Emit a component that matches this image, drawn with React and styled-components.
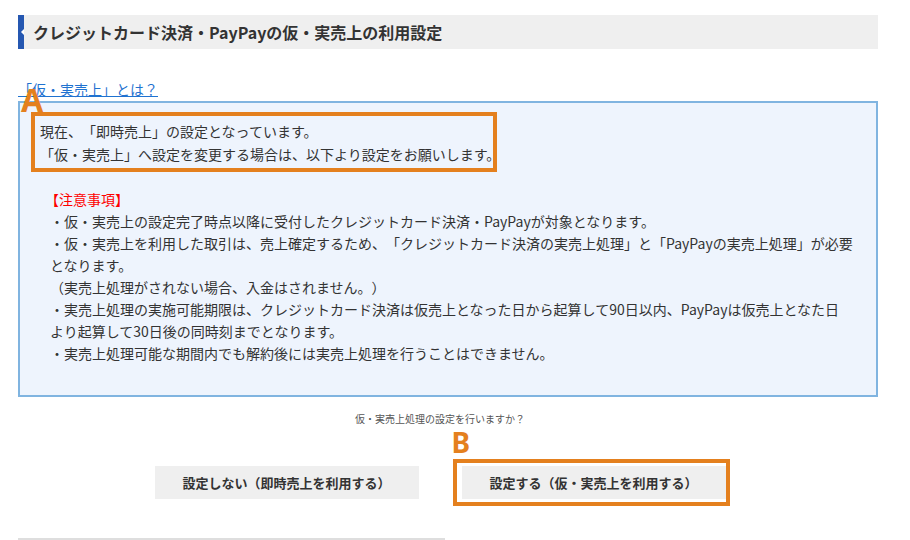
import React from "react";
import styled, { createGlobalStyle } from "styled-components";

const GlobalStyle = createGlobalStyle`
  body {
    margin: 0;
    background: #fff;
    color: #333;
    font-family: "Noto Sans CJK JP", "Noto Sans", sans-serif;
    text-spacing-trim: space-all;
  }
`;

const ORANGE = "#e4801e";

const Page = styled.div`
  width: 860px;
  padding: 15px 0 0 18px;
`;

const Heading = styled.h2`
  position: relative;
  display: flex;
  align-items: center;
  height: 34px;
  margin: 0;
  padding-left: 9px;
  background: #efefef;
  border-left: 6px solid #2557b1;
  font-size: 16px;
  font-weight: 700;
  color: #333;

  &::before {
    content: "";
    position: absolute;
    left: -3px;
    top: 14px;
    border-top: 3px solid transparent;
    border-bottom: 3px solid transparent;
    border-right: 3px solid #fff;
  }
`;

const HelpLink = styled.a`
  display: block;
  width: fit-content;
  margin-top: 29px;
  font-size: 14px;
  line-height: 22px;
  color: #1f72d0;
  text-decoration: underline;
`;

const InfoBox = styled.div`
  position: relative;
  box-sizing: border-box;
  margin-top: 1px;
  padding: 9px 0 31px 20px;
  background: #eef4fd;
  border: 2px solid #80b4e0;
  font-size: 14px;
`;

const Marker = styled.span`
  position: absolute;
  left: ${(p) => p.$left}px;
  top: ${(p) => p.$top}px;
  font-family: "Noto Sans", sans-serif;
  font-weight: 700;
  font-size: ${(p) => p.$size}px;
  line-height: 1;
  color: ${ORANGE};
  pointer-events: none;
`;

const CurrentNote = styled.div`
  box-sizing: border-box;
  width: 466px;
  margin-left: -9px;
  padding: 4px 0 2px 5px;
  border: 4px solid ${ORANGE};
  line-height: 23px;
  white-space: nowrap;
`;

const Notes = styled.div`
  margin-top: 16px;
  padding-left: 10px;
  line-height: 22px;
  white-space: nowrap;
`;

const Caution = styled.span`
  margin-left: -5px;
  color: #f00;
`;

const Footer = styled.div`
  width: 844px;
  text-align: center;
`;

const Question = styled.p`
  margin: 14px 0 0;
  font-size: 10px;
  line-height: 16px;
  color: #555;
`;

const Buttons = styled.div`
  display: flex;
  justify-content: center;
  gap: 43px;
  margin-top: 39px;
`;

const Highlight = styled.div`
  position: relative;

  &::after {
    content: "";
    position: absolute;
    inset: -7px -4px -7px -9px;
    border: 4px solid ${ORANGE};
    pointer-events: none;
  }
`;

const ChoiceButton = styled.button`
  display: block;
  width: 264px;
  height: 33px;
  padding: 0;
  border: none;
  background: #efefef;
  font-family: inherit;
  font-size: 13px;
  font-weight: 700;
  color: #333;
  text-spacing-trim: space-all;
  cursor: pointer;
`;

const Divider = styled.div`
  width: 427px;
  height: 2px;
  margin-top: 39px;
  background: #dedede;
`;

export default function App() {
  return (
    <>
      <GlobalStyle />
      <Page>
        <Heading>クレジットカード決済・PayPayの仮・実売上の利用設定</Heading>
        <HelpLink href="#">「仮・実売上」とは？</HelpLink>
        <InfoBox>
          <Marker $left={1} $top={-19} $size={32}>A</Marker>
          <CurrentNote>
            現在、「即時売上」の設定となっています。
            <br />
            「仮・実売上」へ設定を変更する場合は、以下より設定をお願いします。
          </CurrentNote>
          <Notes>
            <Caution>【注意事項】</Caution>
            <br />
            ・仮・実売上の設定完了時点以降に受付したクレジットカード決済・PayPayが対象となります。
            <br />
            ・仮・実売上を利用した取引は、売上確定するため、「クレジットカード決済の実売上処理」と「PayPayの実売上処理」が必要
            <br />
            となります。
            <br />
            （実売上処理がされない場合、入金はされません。）
            <br />
            ・実売上処理の実施可能期限は、クレジットカード決済は仮売上となった日から起算して90日以内、PayPayは仮売上となた日
            <br />
            より起算して30日後の同時刻までとなります。
            <br />
            ・実売上処理可能な期間内でも解約後には実売上処理を行うことはできません。
          </Notes>
        </InfoBox>
        <Footer>
          <Question>仮・実売上処理の設定を行いますか？</Question>
          <Buttons>
            <ChoiceButton>設定しない（即時売上を利用する）</ChoiceButton>
            <Highlight>
              <Marker $left={-10} $top={-38} $size={28}>B</Marker>
              <ChoiceButton>設定する（仮・実売上を利用する）</ChoiceButton>
            </Highlight>
          </Buttons>
        </Footer>
        <Divider />
      </Page>
    </>
  );
}
